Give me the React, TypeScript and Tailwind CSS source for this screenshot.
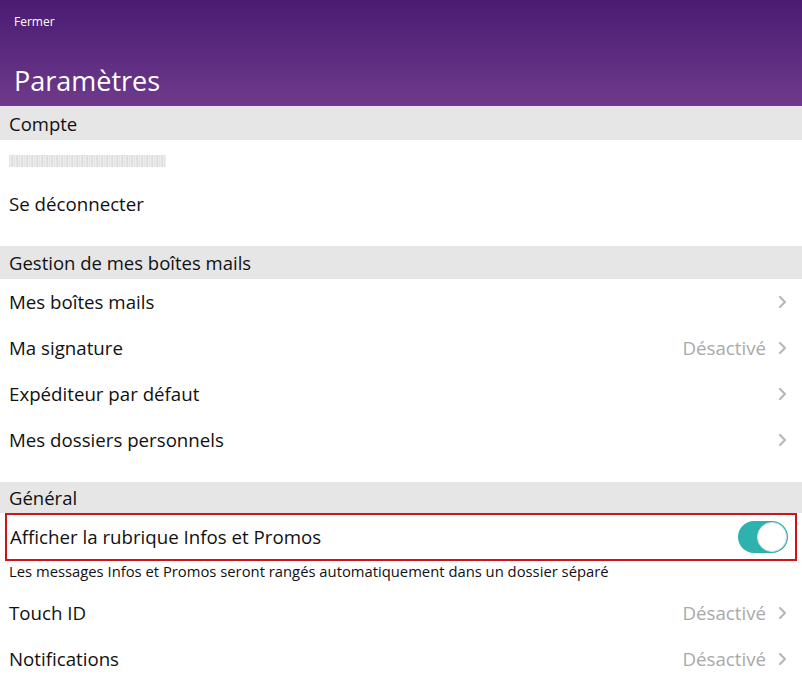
import React from "react";

const Chevron = () => (
  <svg width="9" height="14" viewBox="0 0 9 14" className="ml-[12px]">
    <path d="M2 2 L7 7 L2 12" fill="none" stroke="#b8b8b8" strokeWidth="2.2" strokeLinecap="round" strokeLinejoin="round" />
  </svg>
);

const Header = ({ children, h = "h-[33px]" }: { children: React.ReactNode; h?: string }) => (
  <div className={`${h} bg-[#e6e6e6] flex items-center px-[9px] text-[18.5px] text-[#111]`}>{children}</div>
);

const Row = ({ label, value }: { label: string; value?: string }) => (
  <div className="h-[46px] flex items-center px-[9px] text-[18.7px] text-[#111]">
    <span className="flex-1">{label}</span>
    {value && <span className="text-[#a9a9a9]">{value}</span>}
    <span className="pr-[6px]"><Chevron /></span>
  </div>
);

export default function App() {
  return (
    <div className="w-[802px] h-[680px] overflow-hidden bg-white" style={{ fontFamily: "'Open Sans', Lato, sans-serif" }}>
      <div className="h-[106px] bg-gradient-to-b from-[#4a1b72] to-[#6f3a8c] px-[14px] flex flex-col text-white">
        <div className="text-[12px] mt-[14px] leading-[16px]">Fermer</div>
        <div className="text-[27px] mt-[37px] leading-none">Paramètres</div>
      </div>
      <div className="h-[1px] bg-[#e9e1ef]" />
      <Header h="h-[33px]">Compte</Header>
      <div className="h-[42px] flex items-center px-[9px]">
        <div className="w-[157px] h-[12px] bg-[repeating-linear-gradient(90deg,#d6d6d6_0px,#eeeeee_2px,#c9c9c9_3px,#f4f4f4_5px)] opacity-80" />
      </div>
      <div className="h-[44px] flex items-center px-[9px] text-[18.7px] text-[#111]">Se déconnecter</div>
      <div className="h-[20px]" />
      <Header>Gestion de mes boîtes mails</Header>
      <Row label="Mes boîtes mails" />
      <Row label="Ma signature" value="Désactivé" />
      <Row label="Expéditeur par défaut" />
      <Row label="Mes dossiers personnels" />
      <div className="h-[19px]" />
      <Header h="h-[31px]">Général</Header>
      <div className="mx-[5px] h-[48px] border-2 border-[#d0121b] flex items-center pl-[3px] pr-[7px] text-[18.7px] text-[#111]">
        <span className="flex-1">Afficher la rubrique Infos et Promos</span>
        <div className="w-[50px] h-[32px] rounded-full bg-[#2fb2ae] relative">
          <div className="absolute right-[1px] top-[1px] w-[30px] h-[30px] rounded-full bg-white border border-[#dcdcdc]" />
        </div>
      </div>
      <div className="h-[20px] flex items-center px-[9px] text-[14.8px] text-[#111]">
        Les messages Infos et Promos seront rangés automatiquement dans un dossier séparé
      </div>
      <div className="h-[9px]" />
      <Row label="Touch ID" value="Désactivé" />
      <Row label="Notifications" value="Désactivé" />
    </div>
  );
}
